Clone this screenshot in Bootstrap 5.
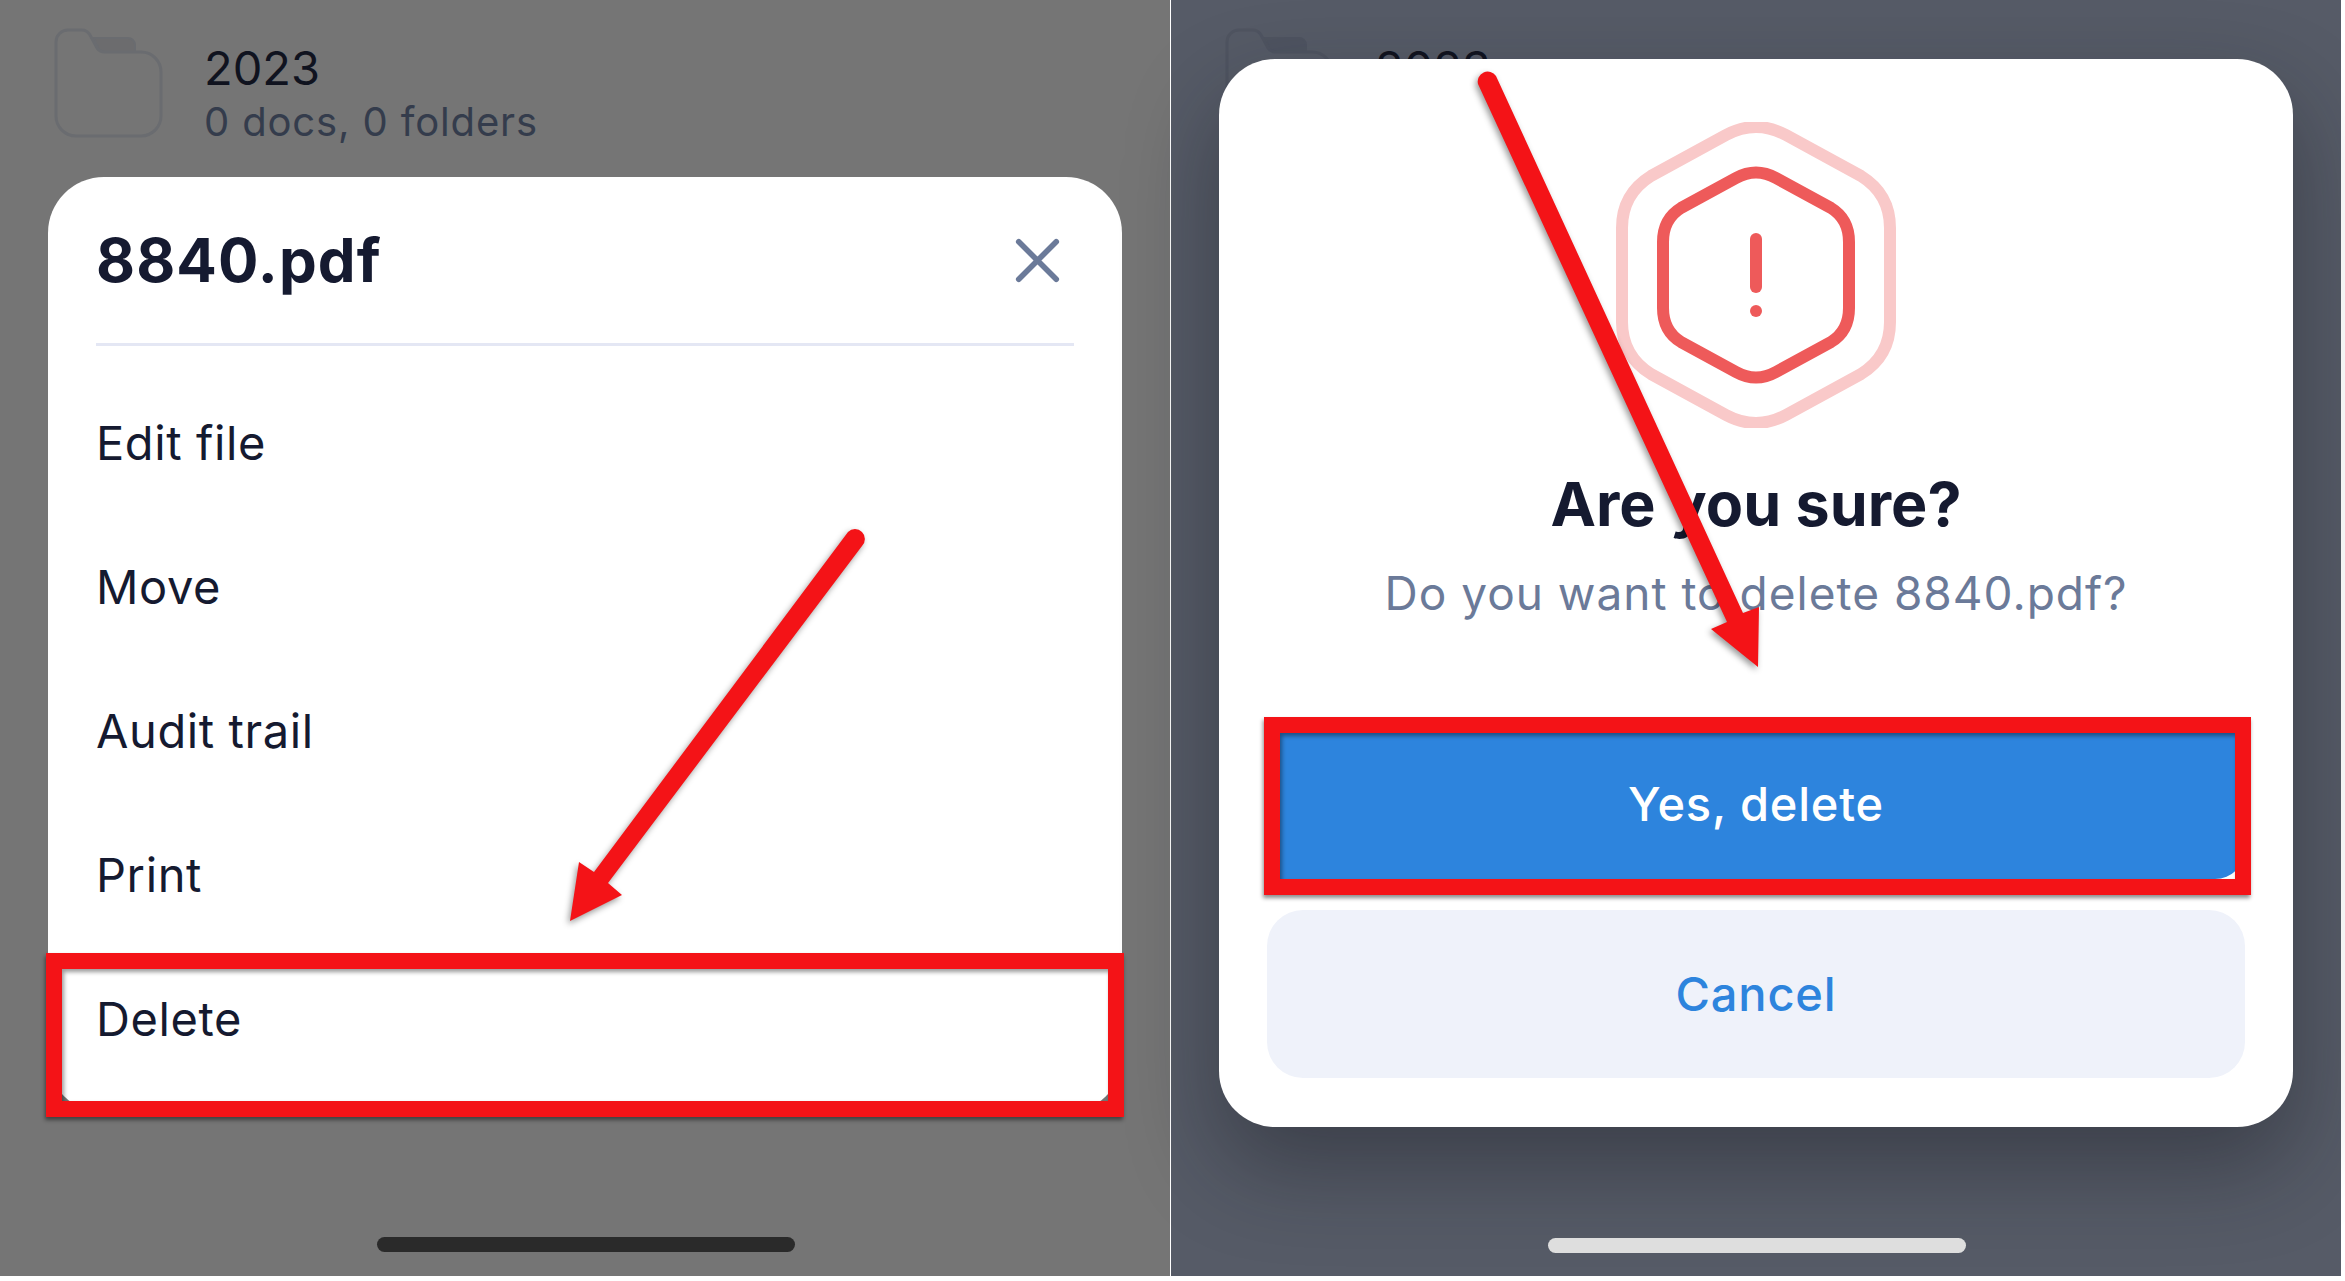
<!DOCTYPE html>
<html lang="en">
<head>
  <meta charset="UTF-8" />
  <title>Delete file</title>
  <link href="https://cdn.jsdelivr.net/npm/bootstrap@5.3.0/dist/css/bootstrap.min.css" rel="stylesheet" />
  <style>
    html, body { margin: 0; background: #fff; }
    .shot {
      position: relative;
      width: 2345px;
      height: 1276px;
      font-family: Inter, "Noto Sans", sans-serif;
      overflow: hidden;
    }
    .panel-left { width: 1170px; background: #757575; }
    .panel-right { width: 1170px; margin-left: 1px; background: #565b67; }
    .panel-left, .panel-right { position: relative; height: 100%; }

    .folder-row { padding: 28px 0 0 54px; gap: 40px; height: 177px; }
    .folder-title { font-size: 47px; line-height: 58px; color: #10131f; margin-top: 11px; }
    .folder-meta { font-size: 40px; line-height: 50px; letter-spacing: .85px; color: #343c4c; }

    .sheet {
      margin: 0 48px;
      height: 936px;
      background: #fff;
      border-radius: 56px;
      padding: 0 48px;
    }
    .sheet-head { height: 169px; border-bottom: 3px solid #e4e7f4; }
    .sheet-title { font-size: 60px; font-weight: 700; color: #151a30; margin: 0; letter-spacing: 1.1px; }
    .close-x { margin-right: 14px; }
    .sheet-list { margin-top: 26px; }
    .sheet-list .list-group-item {
      height: 144px;
      padding: 0;
      padding-top: 43px;
      border: 0;
      font-size: 47px;
      line-height: 56px;
      letter-spacing: .6px;
      color: #151a30;
      background: none;
    }
    .home-bar { width: 418px; height: 15px; border-radius: 8px; position: absolute; left: 377px; }
    .panel-left .home-bar { top: 1237px; background: #2a2a2a; }
    .panel-right .home-bar { top: 1238px; background: #dedede; }

    .confirm-box {
      position: absolute;
      left: 48px; top: 59px;
      width: 1074px;
      height: 1068px;
      background: #fff;
      border-radius: 56px;
      padding: 63px 48px 0;
      box-shadow: 0 40px 90px rgba(20, 22, 30, .4);
    }
    .hex-icon { display: block; margin: 0 auto; }
    .confirm-title { font-size: 61px; font-weight: 700; color: #151a30; margin: 41px 0 0; line-height: 70px; }
    .confirm-text { font-size: 46px; color: #6b7a99; margin: 26px 0 0; line-height: 56px; letter-spacing: 1px; }
    .btn-yes, .btn-no {
      display: block;
      width: 978px;
      font-size: 47px;
      font-weight: 500;
      letter-spacing: .8px;
      border: 0;
    }
    .btn-yes { height: 150px; margin-top: 108px; border-radius: 0 0 30px 0; background: #2d84dd; color: #fff; }
    .btn-no { height: 168px; margin-top: 31px; border-radius: 36px; background: #eff2fa; color: #2d84dd; }

    .red-frame {
      position: absolute;
      border: 16px solid #f41317;
      box-shadow: -1px 3px 4px rgba(0, 0, 0, .45), inset 2px 3px 4px rgba(0, 0, 0, .4);
    }
    .frame-delete { left: 46px; top: 953px; width: 1078px; height: 164px; }
    .frame-yes { left: 1264px; top: 717px; width: 987px; height: 178px; }
    .arrows { position: absolute; left: 0; top: 0; filter: drop-shadow(-2px 3px 3px rgba(0, 0, 0, .4)); }
  </style>
</head>
<body>
  <div class="shot d-flex">
    <div class="panel-left">
      <div class="folder-row d-flex">
        <svg width="110" height="110" viewBox="0 0 110 110" fill="none">
          <path d="M40 10H74a7 7 0 0 1 7 7v7H46z" fill="#6c6c6e" stroke="#6a6c70" stroke-width="2"/>
          <path d="M2 14a12 12 0 0 1 12-12h13a10 10 0 0 1 9 5l7 13a10 10 0 0 0 8 4h36a20 20 0 0 1 20 20v44a20 20 0 0 1-20 20H22a20 20 0 0 1-20-20z" fill="#757575" stroke="#6a6c70" stroke-width="3"/>
        </svg>
        <div>
          <div class="folder-title">2023</div>
          <div class="folder-meta">0 docs, 0 folders</div>
        </div>
      </div>
      <div class="sheet">
        <div class="sheet-head d-flex justify-content-between align-items-center">
          <h2 class="sheet-title">8840.pdf</h2>
          <svg class="close-x" width="45" height="45" viewBox="0 0 48 48" fill="none" stroke="#6b7a99" stroke-width="6" stroke-linecap="round">
            <path d="M4 4L44 44M44 4L4 44"/>
          </svg>
        </div>
        <div class="sheet-list list-group list-group-flush">
          <div class="list-group-item">Edit file</div>
          <div class="list-group-item">Move</div>
          <div class="list-group-item">Audit trail</div>
          <div class="list-group-item">Print</div>
          <div class="list-group-item">Delete</div>
        </div>
      </div>
      <div class="home-bar"></div>
    </div>

    <div class="panel-right">
      <div class="folder-row d-flex">
        <svg width="110" height="110" viewBox="0 0 110 110" fill="none">
          <path d="M40 10H74a7 7 0 0 1 7 7v7H46z" fill="#4f5461" stroke="#4f5461" stroke-width="2"/>
          <path d="M2 14a12 12 0 0 1 12-12h13a10 10 0 0 1 9 5l7 13a10 10 0 0 0 8 4h36a20 20 0 0 1 20 20v44a20 20 0 0 1-20 20H22a20 20 0 0 1-20-20z" fill="#565b67" stroke="#4f5461" stroke-width="3"/>
        </svg>
        <div>
          <div class="folder-title">2023</div>
        </div>
      </div>
      <div class="confirm-box text-center">
        <svg class="hex-icon" width="280" height="306" viewBox="0 0 280 306" fill="none" stroke-width="12">
          <path d="M110 13Q140 -3 170 13L245 54Q274 72 274 106V200Q274 234 245 252L170 293Q140 309 110 293L35 252Q6 234 6 200V106Q6 72 35 54Z" stroke="#f9c9c9"/>
          <path d="M120 56Q140 45 160 56L215 86Q233 97 233 120V186Q233 209 215 220L160 250Q140 261 120 250L65 220Q47 209 47 186V120Q47 97 65 86Z" stroke="#ee5a5a"/>
          <path d="M140 117V165" stroke="#ee5a5a" stroke-linecap="round"/>
          <circle cx="140" cy="189" r="6" fill="#ee5a5a" stroke="none"/>
        </svg>
        <h2 class="confirm-title">Are you sure?</h2>
        <p class="confirm-text">Do you want to delete 8840.pdf?</p>
        <button class="btn btn-yes">Yes, delete</button>
        <button class="btn btn-no">Cancel</button>
      </div>
      <div class="home-bar"></div>
    </div>

    <div class="red-frame frame-delete"></div>
    <div class="red-frame frame-yes"></div>

    <svg class="arrows" width="2345" height="1276" viewBox="0 0 2345 1276">
      <g fill="#f41317">
        <path d="M594 872L579 862L570 921L622 895L608 883L862 546A9 9 0 0 0 848 532Z"/>
        <path d="M1727 622L1711 629L1758 667L1759 607L1743 613L1496 76A10 10 0 0 0 1478 84Z"/>
      </g>
    </svg>
  </div>
</body>
</html>
